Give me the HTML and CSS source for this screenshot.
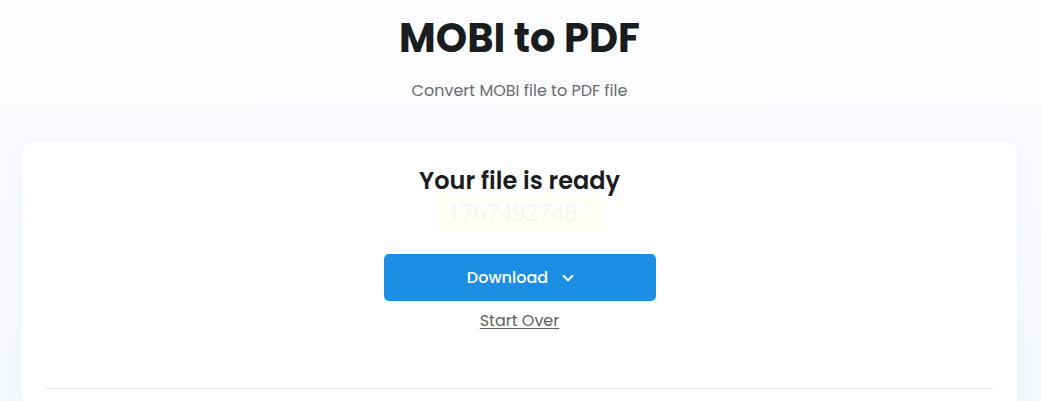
FILE: index.html
```html
<!DOCTYPE html>
<html lang="en">
<head>
<meta charset="utf-8">
<title>MOBI to PDF</title>
<link rel="stylesheet" href="styles.css">
</head>
<body>
<main class="page">
  <header class="hero">
    <h1 class="title">MOBI to PDF</h1>
    <p class="subtitle">Convert MOBI file to PDF file</p>
  </header>
  <section class="card">
    <h2 class="ready">Your file is ready</h2>
    <div class="stamp">1767492748</div>
    <button class="download" type="button">
      <span>Download</span>
      <svg class="chev" width="12" height="8" viewBox="0 0 12 8" aria-hidden="true"><path d="M1.5 1.8 6 6.2l4.5-4.4" fill="none" stroke="#fff" stroke-width="2" stroke-linecap="round" stroke-linejoin="round"/></svg>
    </button>
    <a class="restart" href="#">Start Over</a>
    <hr class="divider">
  </section>
</main>
</body>
</html>
```
FILE: styles.css
```css
* { box-sizing: border-box; }
html, body { margin: 0; padding: 0; }
body {
  font-family: "Poppins", "Inter", "Noto Sans", sans-serif;
  background: linear-gradient(180deg, #fdfdff 0%, #f4f7fc 100%);
  height: 401px;
  overflow: hidden;
  color: #1b1e22;
}
.page {
  padding: 0 24px 0 22px;
  display: flex;
  flex-direction: column;
}
.hero {
  display: flex;
  flex-direction: column;
  align-items: center;
  padding-top: 13px;
}
.title {
  margin: 0;
  font-size: 40px;
  line-height: 50px;
  font-weight: 700;
  color: #1a1d20;
}
.subtitle {
  margin: 16px 0 0;
  font-size: 16px;
  line-height: 24px;
  color: #6c6c70;
}
.card {
  margin-top: 39px;
  background: #fff;
  border-radius: 12px 12px 0 0;
  box-shadow: 0 0 24px rgba(150, 170, 200, 0.08);
  display: flex;
  flex-direction: column;
  align-items: center;
  padding: 24px 24px 0;
  height: 259px;
}
.ready {
  margin: 0;
  font-size: 24px;
  line-height: 30px;
  font-weight: 600;
  color: #1a1c1f;
}
.stamp {
  margin-top: -3px;
  width: 166px;
  height: 39px;
  padding-left: 11px;
  background: #fffff6;
  font-family: "Liberation Serif", "DejaVu Serif", serif;
  font-size: 26px;
  line-height: 39px;
  text-align: left;
  color: #f6f6ef;
}
.download {
  margin-top: 22px;
  width: 272px;
  height: 47px;
  border: 0;
  border-radius: 5px;
  background: #1c8fe4;
  color: #fff;
  font-family: inherit;
  font-size: 16px;
  font-weight: 500;
  display: flex;
  align-items: center;
  justify-content: center;
  gap: 14px;
  padding-left: 8px;
}
.chev { display: block; }
.restart {
  margin-top: 10px;
  font-size: 16px;
  line-height: 20px;
  color: #5e5f63;
  text-decoration: underline;
  text-underline-offset: 2px;
}
.divider {
  align-self: stretch;
  margin: 57px 0 0;
  border: 0;
  border-top: 1px solid #e3e3e3;
}
```
